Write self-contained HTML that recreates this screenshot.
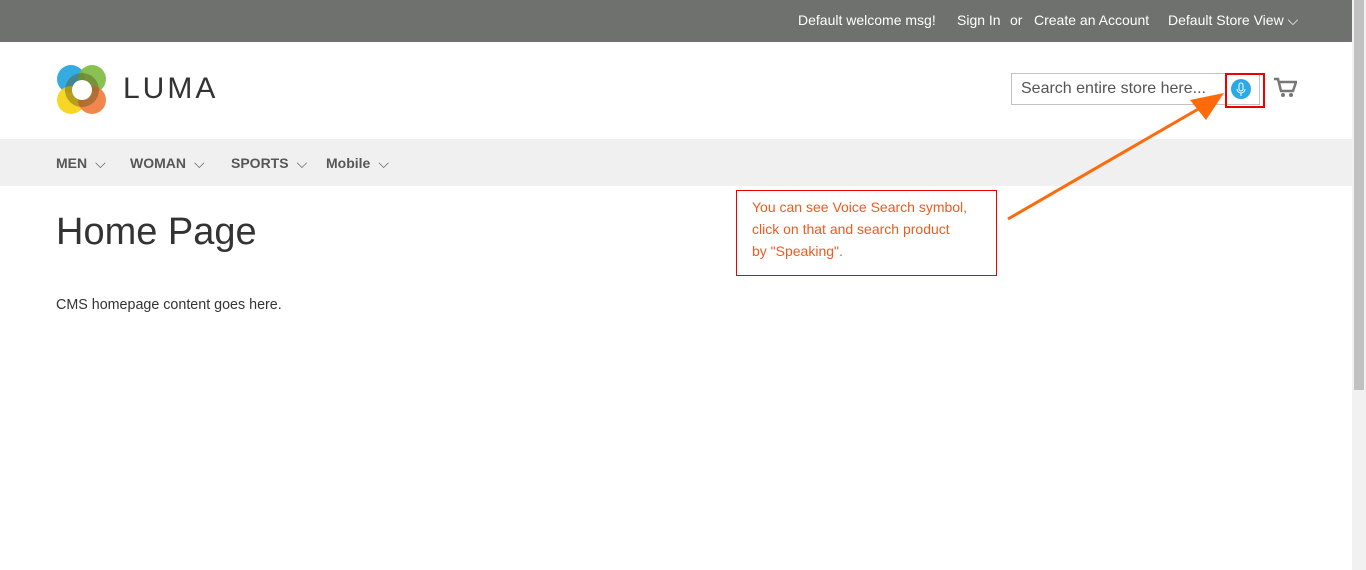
<!DOCTYPE html>
<html><head><style>
body{margin:0;width:1366px;height:570px;overflow:hidden;background:#fff;font-family:"Liberation Sans",sans-serif;position:relative}
.top{position:absolute;left:0;top:0;width:1352px;height:42px;background:#6e716e;color:#fff;font-size:14px}
.top span{position:absolute;top:12px}
.nav{position:absolute;left:0;top:139px;width:1352px;height:47px;background:#f0f0f0}
.nav span{position:absolute;top:16px;font-size:14px;font-weight:bold;color:#575757}
.nav i{font-style:normal;font-weight:normal;margin-left:8px}
.scroll{position:absolute;right:0;top:0;width:14px;height:570px;background:#f1f1f1}
.thumb{position:absolute;right:2px;top:0;width:10px;height:390px;background:#c1c1c1}
</style></head><body>
<div class="top">
<span style="left:798px">Default welcome msg!</span>
<span style="left:957px">Sign In</span>
<span style="left:1010px">or</span>
<span style="left:1034px">Create an Account</span>
<span style="left:1168px">Default Store View ⌵</span>
</div>
<svg style="position:absolute;left:56px;top:64px" width="52" height="52">
<circle cx="15" cy="15" r="14" fill="#1ea3dc" opacity=".9"/>
<circle cx="36" cy="15" r="14" fill="#7cbb40" opacity=".9"/>
<circle cx="15" cy="36" r="14" fill="#f6d10e" opacity=".9"/>
<circle cx="36" cy="36" r="14" fill="#ef7a3a" opacity=".9"/>
<circle cx="26" cy="26" r="17" fill="#5a4a1a" opacity=".4"/>
<circle cx="26" cy="26" r="10" fill="#fff"/>
</svg>
<div style="position:absolute;left:123px;top:72px;font-size:30px;letter-spacing:3px;color:#333">LUMA</div>
<div style="position:absolute;left:1011px;top:73px;border:1px solid #c2c2c2;font-size:16px;color:#555;line-height:30px;padding-left:9px;box-sizing:border-box;width:249px;height:32px">Search entire store here...</div>
<div style="position:absolute;left:1225px;top:73px;width:36px;height:31px;border:2px solid #e00"></div>
<svg style="position:absolute;left:1230px;top:78px" width="22" height="22"><circle cx="11" cy="11" r="10" fill="#29a9e8"/><rect x="9" y="5" width="4" height="8" rx="2" fill="none" stroke="#fff"/><path d="M7 11a4 4 0 0 0 8 0M11 15v3" fill="none" stroke="#fff"/></svg>
<svg style="position:absolute;left:1273px;top:77px" width="24" height="22"><path d="M1 2h4l3 12h12l3-9H6" fill="none" stroke="#777" stroke-width="2.5"/><circle cx="10" cy="18" r="2" fill="#777"/><circle cx="18" cy="18" r="2" fill="#777"/></svg>
<div class="nav">
<span style="left:56px">MEN<i>⌵</i></span><span style="left:130px">WOMAN<i>⌵</i></span><span style="left:231px">SPORTS<i>⌵</i></span><span style="left:326px">Mobile<i>⌵</i></span>
</div>
<div style="position:absolute;left:56px;top:211px;font-size:38px;font-weight:300;color:#333">Home Page</div>
<div style="position:absolute;left:56px;top:297px;font-size:14.3px;color:#333">CMS homepage content goes here.</div>
<div style="position:absolute;left:736px;top:190px;border:1px solid #e00;box-sizing:border-box;width:261px;height:86px;padding:5px 15px;color:#f05a1e;font-size:14px;line-height:22px">You can see Voice Search symbol,<br>click on that and search product<br>by "Speaking".</div>
<svg style="position:absolute;left:0;top:0" width="1366" height="570"><path d="M1008 219L1200 108" stroke="#ff6a0a" stroke-width="3"/><path d="M1224 93L1190 100L1206 120Z" fill="#ff6a0a"/></svg>
<div class="scroll"><div class="thumb"></div></div>
</body></html>
